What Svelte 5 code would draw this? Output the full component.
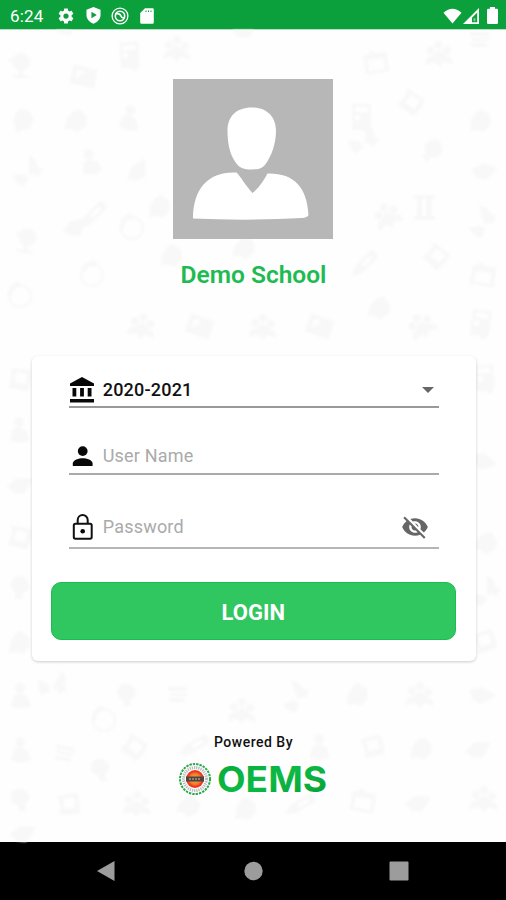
<script>
  const sessions = ['2020-2021'];
  let session = $state(sessions[0]);
  let username = $state('');
  let password = $state('');

  // Faint school doodles behind the page: [shape, x, y, rotation]
  const doodles = [
    ['globe', 20, 35, 0], ['picture', 84, 47, 12], ['doc', 130, 27, -3], ['people', 176, 20, 0],
    ['lines', 66, -5, 8], ['tag', 23, 89, -20], ['tag', 77, 90, 10], ['person', 130, 88, 10],
    ['hook', 28, 140, 0], ['person', 91, 132, -10], ['cap', 137, 140, -35],
    ['pencil', 93, 185, 45], ['tag', 160, 176, 0], ['globe', 26, 210, 10], ['cap', 75, 196, -15],
    ['ring', 132, 198, 0], ['ring', 92, 245, 20], ['ring', 20, 266, 0], ['people', 141, 297, 8],
    ['tag', 172, 225, 0], ['tag', 245, 217, 10], ['cap', 245, -2, 0], ['picture', 200, 297, 20],
    ['calendar', 377, 33, -8], ['people', 438, 25, -4], ['lines', 480, 8, 0], ['book', 411, 73, 35],
    ['doc', 362, 89, 0], ['tag', 481, 90, 0], ['bulb', 432, 121, 45], ['hook', 364, 108, 10],
    ['cap', 484, 140, 12], ['people', 387, 187, -25], ['columns', 425, 177, 0],
    ['hook', 482, 190, -15], ['pencil', 364, 234, 45], ['book', 436, 227, 40], ['calendar', 484, 246, 8],
    ['tag', 380, 277, 10], ['people', 421, 297, -30], ['doc', 481, 295, 8],
    ['people', 262, 298, 0], ['picture', 320, 297, 20],
    ['book', 20, 350, 8], ['person', 20, 400, 0], ['cap', 20, 454, 0], ['book', 20, 508, 12],
    ['bulb', 20, 558, 10], ['tag', 20, 612, 0], ['doc', 485, 350, -4], ['cap', 484, 430, 40],
    ['tag', 487, 512, 20], ['hook', 486, 560, 0], ['book', 485, 612, -20],
    ['person', 21, 666, 0], ['hook', 54, 653, 30], ['bulb', 127, 665, 0], ['lines', 178, 663, 0],
    ['ring', 104, 690, 0], ['person', 21, 720, 0], ['lines', 65, 722, 10], ['book', 134, 718, 35],
    ['bulb', 101, 740, -10], ['pencil', 194, 716, 60], ['bulb', 21, 770, -10], ['book', 69, 775, -8],
    ['people', 136, 775, 0], ['tag', 190, 775, 20], ['cap', 23, 802, 0], ['people', 241, 682, 0],
    ['tag', 246, 778, 0], ['hook', 295, 665, -20], ['tag', 358, 664, 0], ['people', 419, 666, 0],
    ['cap', 482, 664, 25], ['person', 320, 717, 0], ['book', 373, 717, -15], ['tag', 422, 718, 5],
    ['cap', 478, 718, -5], ['pencil', 300, 775, 60], ['calendar', 364, 772, 10], ['cap', 418, 772, 0],
    ['people', 483, 770, 0]
  ];
</script>

<div class="screen">
  <header class="status">
    <span class="status__time">6:24</span>
    <svg class="status__gear" viewBox="0 0 24 24"><path d="M19.43 12.98a7.8 7.8 0 0 0 0-1.96l2.11-1.65a.5.5 0 0 0 .12-.64l-2-3.46a.5.5 0 0 0-.61-.22l-2.49 1a7.3 7.3 0 0 0-1.69-.98l-.38-2.65A.5.5 0 0 0 14 2h-4a.5.5 0 0 0-.49.42l-.38 2.65c-.61.25-1.17.59-1.69.98l-2.49-1a.5.5 0 0 0-.61.22l-2 3.46a.5.5 0 0 0 .12.64l2.11 1.65a7.9 7.9 0 0 0 0 1.96l-2.11 1.65a.5.5 0 0 0-.12.64l2 3.46c.12.22.39.3.61.22l2.49-1c.52.4 1.08.73 1.69.98l.38 2.65c.03.24.24.42.49.42h4c.25 0 .46-.18.49-.42l.38-2.65c.61-.25 1.17-.59 1.69-.98l2.49 1c.23.09.49 0 .61-.22l2-3.46a.5.5 0 0 0-.12-.64zM12 15.5a3.5 3.5 0 1 1 0-7 3.5 3.5 0 0 1 0 7z" /></svg>
    <svg class="status__shield" viewBox="0 0 16 18"><path fill-rule="evenodd" d="M8 0l7.500 2.800v5.700c0 4.200-3 7.700-7.500 9.200C3.500 16.200.5 12.700.5 8.500V2.800zM5.800 5v7l5.700-3.500z" /></svg>
    <svg class="status__sync" viewBox="0 0 18 18"><g fill="none" stroke="#fff"><circle cx="9" cy="9" r="7.900" stroke-width="1.300" /><circle cx="9" cy="9" r="4.700" stroke-width="1.600" /><path stroke-width="1.700" d="M4.800 6.800q4-.8 5 2t3.700 2" /></g></svg>
    <svg class="status__card" viewBox="0 0 14 16"><path fill-rule="evenodd" d="M5 .2h7.500q1.300 0 1.300 1.300v13q0 1.300-1.300 1.300h-11Q.2 15.800.2 14.500V5zM5.500 2.400v1.600h1V2.400zm2.500 0v1.600h1V2.400zm2.500 0v1.600h1V2.400z" /></svg>
    <span class="status__gap"></span>
    <svg class="status__wifi" viewBox="0 0 20 16"><path d="M.5 4.600Q10-3.800 19.500 4.600L10 16z" /></svg>
    <svg class="status__signal" viewBox="0 0 16 16"><path fill-rule="evenodd" d="M0 16L16 0v16zM14.200 4.500L9 9.700v4.600h5.200z" /><path d="M10.500 10.200h2v3h-2z" opacity=".45" /></svg>
    <svg class="status__battery" viewBox="0 0 11 17"><path d="M3 0h5v1.700h1.700q1.300 0 1.300 1.300v12.500q0 1.500-1.300 1.500H1.300Q0 17 0 15.500V3q0-1.300 1.300-1.300H3z" /></svg>
  </header>

  <main class="page">
    <svg class="doodles" viewBox="0 0 506 812" aria-hidden="true">
      {#each doodles as [shape, x, y, angle]}
        <g transform="translate({x} {y}) rotate({angle})">
          {#if shape === 'globe'}
            <circle cx="1" cy="-3" r="9" /><path d="M-1 5h4v5h5v3H-7v-3h6zM-11-6h5v3h-5z" />
          {:else if shape === 'picture'}
            <path fill-rule="evenodd" d="M-13-10h25V9h-25zM-8-6v10L0-6z" />
          {:else if shape === 'doc'}
            <path fill-rule="evenodd" d="M-10-15H9V8L5 15l-6-4h-9zM-7-12v5H6v-5zm0 8v5h5v-5z" />
          {:else if shape === 'people'}
            <circle cx="-7" cy="-5" r="4" /><circle cx="1" cy="-10" r="4" /><circle cx="9" cy="-4" r="4" /><path d="M-13 9q0-9 6-8l8-6 8 7q6 0 5 8L5 7l-4 5-5-5z" />
          {:else if shape === 'lines'}
            <path d="M-10-6H8l2 4h-20zM-8 0H9v3H-8zM-10 5H6l2 4H-8z" />
          {:else if shape === 'tag'}
            <path d="M-10 0l5-8 6-3 8 6 1 9-7 8-6-2-8 1z" />
          {:else if shape === 'person'}
            <circle cx="-1" cy="-8" r="5" /><path d="M-7-1l6-2 7 3 4 10q-10 5-20 0z" />
          {:else if shape === 'hook'}
            <path d="M-15 5q3 9 10 12l6-8-5-5zM1-15l6 4 3 8 5 2-5 8-4-3-5 1z" />
          {:else if shape === 'cap'}
            <path d="M-13 2L-3-6 13-5 8 4 3 10-6 9z" />
          {:else if shape === 'pencil'}
            <path fill-rule="evenodd" d="M-5-15q5-3 10 0V8L0 18-5 8zM-2-10v12h4v-12z" />
          {:else if shape === 'ring'}
            <circle class="outline" r="11" /><path d="M-13 0l3-10 8-5 4 5-8 3-3 8z" />
          {:else if shape === 'calendar'}
            <path fill-rule="evenodd" d="M-13-9l6-1 2-4 4 4h12v20h-24zM-9-4V7H7V-4z" />
          {:else if shape === 'book'}
            <path fill-rule="evenodd" d="M-11-10L9-11q4 9 0 21l-20-1q4-9 0-19zM-5-7v10H6V-7z" />
          {:else if shape === 'bulb'}
            <path d="M-3 11l-1-6q-8-4-5-11 4-8 11-5 9 4 6 12L3 6l2 5z" />
          {:else}
            <path d="M-11-12H10v4H7V9h3v4h-21V9h3V-8h-3zM-3-8V9h4V-8z" fill-rule="evenodd" />
          {/if}
        </g>
      {/each}
    </svg>

    <svg class="avatar" viewBox="0 0 160 160">
      <path fill="#b7b7b7" d="M0 0h160v160H0z" />
      <path fill="#fff" d="M78.500 28.500c15 0 24.500 9 24.500 23 0 14-5 26-10 33-4 5.500-8 6-14 6-8 0-13-1.500-17-8-5.500-8-7.500-19-7.500-31 0-14 9-23 24-23z" />
      <path fill="#fff" d="M63.500 93.500C68 98 72 106 79.500 114 86 109 91 101 94.500 94.500 121 94 134 108 135.500 136q-1 2.500-7 3-52 3-108.500.500C20 108 37 92 63.500 93.500z" />
    </svg>
    <h1 class="school">Demo School</h1>

    <form class="card" onsubmit={(e) => e.preventDefault()}>
      <label class="field field--session">
        <svg class="field__icon" viewBox="0 0 26 26"><path d="M13 0l12 6.500V9H1V6.500zM3.500 11h3.800v8.500H3.500zm7.600 0h3.800v8.500h-3.800zm7.600 0h3.800v8.500h-3.800zM1 22h24v3.500H1z" /></svg>
        <select bind:value={session} aria-label="Session">
          {#each sessions as s}<option>{s}</option>{/each}
        </select>
        <svg class="field__arrow" viewBox="0 0 12 6"><path d="M0 0h12L6 6z" /></svg>
      </label>
      <label class="field field--user">
        <svg class="field__icon" viewBox="0 0 26 26"><circle cx="13.700" cy="8.100" r="4.900" /><path d="M3.800 23v-2.500c0-3.500 6-5.300 9.900-5.300s9.900 1.800 9.900 5.300V23z" /></svg>
        <input bind:value={username} placeholder="User Name" />
      </label>
      <label class="field field--password">
        <svg class="field__icon" viewBox="0 0 26 26"><g fill="none" stroke="#111" stroke-width="2"><rect x="4.800" y="9.700" width="17.900" height="15" rx="1.600" /><path d="M8.700 9.700V6a5 5 0 0 1 10 0v3.700" /></g><circle cx="13.700" cy="17.300" r="2.300" /></svg>
        <input type="password" bind:value={password} placeholder="Password" />
        <svg class="field__eye" viewBox="0 0 24 24"><path d="M12 7c2.760 0 5 2.240 5 5 0 .650-.130 1.260-.360 1.830l2.920 2.920c1.510-1.260 2.700-2.890 3.430-4.750-1.730-4.390-6-7.500-11-7.500-1.400 0-2.740.250-3.980.700l2.160 2.160C10.740 7.130 11.350 7 12 7zM2 4.270l2.280 2.280.460.460C3.080 8.300 1.780 10.020 1 12c1.730 4.390 6 7.500 11 7.500 1.550 0 3.030-.300 4.380-.840l.420.420L19.730 22 21 20.730 3.270 3 2 4.270zM7.530 9.800l1.550 1.550c-.050.210-.080.430-.080.650 0 1.660 1.340 3 3 3 .220 0 .440-.030.650-.080l1.550 1.550c-.670.330-1.410.530-2.200.530-2.760 0-5-2.240-5-5 0-.790.200-1.530.530-2.200zm4.310-.780l3.150 3.150.020-.160c0-1.660-1.340-3-3-3l-.170.010z" /></svg>
      </label>
      <button class="login">LOGIN</button>
    </form>

    <p class="powered">Powered By</p>
    <div class="brand">
      <svg class="brand__seal" viewBox="0 0 32 32">
        <defs>
          <radialGradient id="sun"><stop offset="0" stop-color="#f6b13c" /><stop offset=".6" stop-color="#f47a2d" /><stop offset=".85" stop-color="#ee351f" /><stop offset="1" stop-color="#e9381f" /></radialGradient>
        </defs>
        <circle cx="16" cy="16" r="15" fill="#fff" stroke="#27a94d" stroke-width="2" stroke-dasharray="2.400 1" />
        <circle cx="16" cy="16" r="11.500" fill="none" stroke="#bbb" stroke-width="3" stroke-dasharray="1.300 .9" />
        <circle cx="16" cy="16" r="9" fill="url(#sun)" />
        <path fill="#4a4743" d="M7 13.500h18v5H7z" /><path stroke="#a8977e" stroke-width="1.500" stroke-dasharray="2 1" d="M10 16h12" />
      </svg>
      <svg class="brand__name" viewBox="0 0 110 46">
        <defs>
          <linearGradient id="leaf" x1="0" y1="0" x2="1" y2="1"><stop offset="0" stop-color="#08a83a" /><stop offset=".5" stop-color="#0cba45" /><stop offset="1" stop-color="#079d35" /></linearGradient>
        </defs>
        <text x="-1" y="36" textLength="110" lengthAdjust="spacingAndGlyphs" fill="url(#leaf)">OEMS</text>
      </svg>
    </div>
  </main>

  <nav class="nav">
    <svg viewBox="0 0 20 22"><path d="M1 11L18.500 1v20z" /></svg>
    <svg viewBox="0 0 20 22"><circle cx="10.500" cy="11" r="9.200" /></svg>
    <svg viewBox="0 0 20 22"><rect x=".5" y="1.500" width="19" height="19" rx="1" /></svg>
  </nav>
</div>

<style>
  :global(body) { background: #fefefe; }
  .screen {
    display: flex; flex-direction: column; width: 506px; height: 900px;
    overflow: hidden; font-family: Roboto, "Liberation Sans", sans-serif;
  }
  svg { display: block; flex: none; }

  .status {
    display: flex; align-items: center; height: 30px; padding: 2px 8px 0 10px;
    box-sizing: border-box; background: #0ba03b; border-bottom: 1px solid #b9dfc3; color: #fff; fill: #fff;
  }
  .status__time { width: 47px; font-size: 17px; line-height: 20px; letter-spacing: 0.2px; }
  .status__gear { width: 18px; height: 18px; margin-right: 11px; }
  .status__shield { width: 15px; height: 17px; margin-right: 10px; }
  .status__sync { width: 18px; height: 18px; margin-right: 11px; }
  .status__card { width: 14px; height: 16px; }
  .status__gap { flex: 1; }
  .status__wifi { width: 19px; height: 16px; margin-right: 1px; }
  .status__signal { width: 16px; height: 16px; margin-right: 8px; }
  .status__battery { width: 11px; height: 17px; }

  .page {
    position: relative; isolation: isolate; display: flex; flex-direction: column; align-items: center;
    height: 812px; background: #fefefe;
  }
  .doodles { position: absolute; inset: 0; z-index: -1; width: 506px; height: 812px; fill: #f8f8f8; filter: blur(1.3px); }
  .outline { fill: none; stroke: #f8f8f8; stroke-width: 2; }

  .avatar { width: 160px; height: 160px; margin-top: 49px; }
  .school {
    margin: 21px 0 66px; padding-left: 1px; font-size: 24.500px; line-height: 30px; font-weight: 600;
    letter-spacing: 0; color: #1dbb51;
  }

  .card {
    display: flex; flex-direction: column; width: 444px; height: 305px; box-sizing: border-box;
    margin-left: 1.500px; padding: 14px 20px 21px; border-radius: 6px; background: #fff;
    box-shadow: 0 1px 3px rgba(0, 0, 0, 0.2);
  }
  .field {
    display: flex; align-items: center; box-sizing: border-box;
    width: 370px; margin-left: 17px; border-bottom: 2px solid #aaa;
  }
  .field--session { height: 38px; padding-top: 3px; border-color: #999; }
  .field--user { height: 52px; margin-top: 15px; padding-top: 16px; }
  .field--password { height: 52px; margin-top: 22px; padding-top: 10px; border-color: #b5b5b5; }
  .field__icon { width: 26px; height: 26px; margin-right: 8px; fill: #080808; }
  .field__arrow { width: 12px; height: 6px; margin-right: 5px; fill: #666; }
  .field__eye { width: 28px; height: 28px; margin-right: 10px; fill: #666; }
  .field input, .field select {
    flex: 1; min-width: 0; height: 26px; padding: 0; border: 0; outline: 0; background: none;
    font: 400 18px/26px Roboto, "Liberation Sans", sans-serif; letter-spacing: 0.2px; color: #111;
  }
  .field select { appearance: none; font-weight: 500; }
  .field input::placeholder { color: #aaa; opacity: 1; }

  .login {
    width: 405px; height: 58px; margin-top: auto; margin-left: -1px; padding: 3px 0 0;
    border: 1px solid #19bd51; border-radius: 10px; background: #30c660; color: #fff;
    font: 700 22px/26px Roboto, "Liberation Sans", sans-serif;
  }

  .powered { margin: 72px 0 0; padding-left: 1px; font-size: 14px; line-height: 18px; font-weight: 500; letter-spacing: 0.5px; color: #111; }
  .brand { display: flex; align-items: center; gap: 7px; margin-top: 5px; }
  .brand__seal { width: 32px; height: 32px; }
  .brand__name { width: 110px; height: 46px; font: 700 35px Inter, "Liberation Sans", sans-serif; }

  .nav {
    display: flex; flex: 1; align-items: center; justify-content: space-between;
    box-sizing: border-box; padding: 0 97px 0 96px; background: #000; fill: #9c9c9c;
  }
  .nav svg { width: 20px; height: 22px; }
</style>
